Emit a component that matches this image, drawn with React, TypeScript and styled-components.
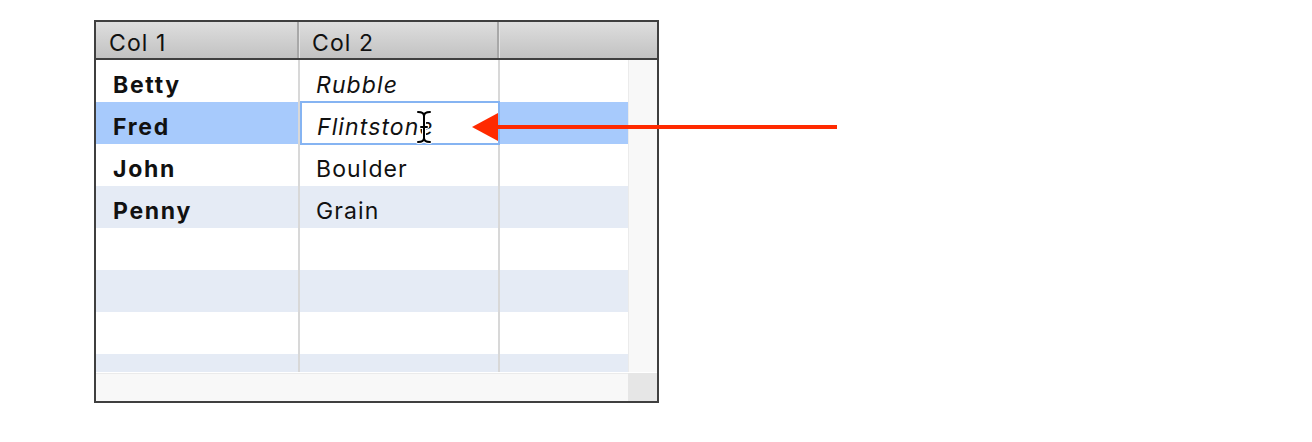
import React from "react";
import styled, { createGlobalStyle } from "styled-components";

const Global = createGlobalStyle`
  html, body { margin: 0; padding: 0; background: #ffffff; }
  body { font-family: Inter, "Open Sans", "Liberation Sans", sans-serif; }
`;

const Page = styled.div`
  position: relative;
  width: 1312px;
  height: 442px;
  padding: 20px 0 0 94px;
  box-sizing: border-box;
`;

const Window = styled.div`
  width: 565px;
  height: 383px;
  box-sizing: border-box;
  border: 2px solid #3f3f3f;
  display: grid;
  grid-template-rows: 38px 1fr;
  background: #ffffff;
`;

const Header = styled.div`
  display: grid;
  grid-template-columns: 203px 200px 1fr;
  background: linear-gradient(#dedede, #c2c2c2);
  border-bottom: 2px solid #3f3f3f;
`;

const HeaderCell = styled.div<{ $sep?: boolean }>`
  display: flex;
  align-items: center;
  padding: 5px 0 0 ${(p) => (p.$sep ? "12px" : "13px")};
  font-size: 23px;
  letter-spacing: 1.1px;
  color: #111;
  box-sizing: border-box;
  border-right: ${(p) => (p.$sep ? "none" : "2px solid #a8a8a8")};
  box-shadow: ${(p) => (p.$sep ? "none" : "1px 0 0 #e2e2e2")};
`;

const Body = styled.div`
  display: grid;
  grid-template-columns: 532px 1fr;
  grid-template-rows: 312px 1fr;
`;

const Content = styled.div`
  position: relative;
  overflow: hidden;
`;

const Row = styled.div<{ $stripe?: boolean; $selected?: boolean }>`
  display: grid;
  grid-template-columns: 204px 200px 1fr;
  height: 42px;
  background: ${(p) =>
    p.$selected ? "#a7cafc" : p.$stripe ? "#e5ebf5" : "#ffffff"};
`;

const Cell = styled.div<{ $bold?: boolean; $italic?: boolean; $last?: boolean }>`
  display: flex;
  align-items: center;
  padding: 7px 0 0 ${(p) => (p.$bold ? "17px" : "16px")};
  font-size: 23px;
  letter-spacing: ${(p) => (p.$bold ? "1.7px" : "1.1px")};
  font-weight: ${(p) => (p.$bold ? 700 : 400)};
  font-style: ${(p) => (p.$italic ? "italic" : "normal")};
  color: #111;
  box-sizing: border-box;
  border-right: ${(p) => (p.$last ? "none" : "2px solid #d8d8d8")};
`;

const EditCell = styled.div`
  position: relative;
  box-sizing: border-box;
  border-right: 2px solid #d8d8d8;
`;

const Field = styled.div`
  position: absolute;
  left: 0;
  top: -1px;
  width: 200px;
  height: 44px;
  box-sizing: border-box;
  border: 2px solid #86b4f2;
  background: #ffffff;
  display: flex;
  align-items: center;
  padding: 7px 0 0 15px;
  font-size: 23px;
  letter-spacing: 1.1px;
  font-style: italic;
  color: #111;
  z-index: 2;
`;

const Cursor = styled.svg`
  position: absolute;
  left: 113px;
  top: 7px;
  z-index: 3;
`;

const VScroll = styled.div`
  background: #f8f8f8;
  border-left: 1px solid #ebebeb;
`;

const HScroll = styled.div`
  background: #f8f8f8;
  border-top: 1px solid #ebebeb;
  margin-top: 1px;
`;

const Corner = styled.div`
  background: #e6e6e6;
  margin-top: 1px;
`;

const Arrow = styled.svg`
  position: absolute;
  left: 0;
  top: 0;
  z-index: 10;
  pointer-events: none;
`;

type R = { a: string; b: string; italic?: boolean };
const data: (R | null)[] = [
  { a: "Betty", b: "Rubble", italic: true },
  { a: "Fred", b: "Flintstone", italic: true },
  { a: "John", b: "Boulder" },
  { a: "Penny", b: "Grain" },
  null,
  null,
  null,
  null,
];

const beam =
  "M3 2 C6 2 9 3 9 6 C9 3 12 2 15 2 M9 6 L9 28 M3 32 C6 32 9 31 9 28 C9 31 12 32 15 32 M6 17 L12 17";

export default function App() {
  return (
    <>
      <Global />
      <Page>
        <Window>
          <Header>
            <HeaderCell>Col 1</HeaderCell>
            <HeaderCell>Col 2</HeaderCell>
            <HeaderCell $sep />
          </Header>
          <Body>
            <Content>
              {data.map((r, i) => {
                const selected = i === 1;
                return (
                  <Row key={i} $stripe={i % 2 === 1} $selected={selected}>
                    <Cell $bold>{r ? r.a : ""}</Cell>
                    {selected ? (
                      <EditCell>
                        <Field>
                          Flintstone
                          <Cursor width="18" height="34" viewBox="0 0 18 34">
                            <g fill="none" strokeLinecap="round">
                              <path d={beam} stroke="#ffffff" strokeWidth="4" />
                              <path d={beam} stroke="#000000" strokeWidth="2" />
                            </g>
                          </Cursor>
                        </Field>
                      </EditCell>
                    ) : (
                      <Cell $italic={r?.italic}>{r ? r.b : ""}</Cell>
                    )}
                    <Cell $last />
                  </Row>
                );
              })}
            </Content>
            <VScroll />
            <HScroll />
            <Corner />
          </Body>
        </Window>
        <Arrow width="1312" height="442" viewBox="0 0 1312 442">
          <line x1="494" y1="127" x2="837" y2="127" stroke="#ff2a00" strokeWidth="4" />
          <polygon points="472,127 498,113 498,141" fill="#ff2a00" />
        </Arrow>
      </Page>
    </>
  );
}
